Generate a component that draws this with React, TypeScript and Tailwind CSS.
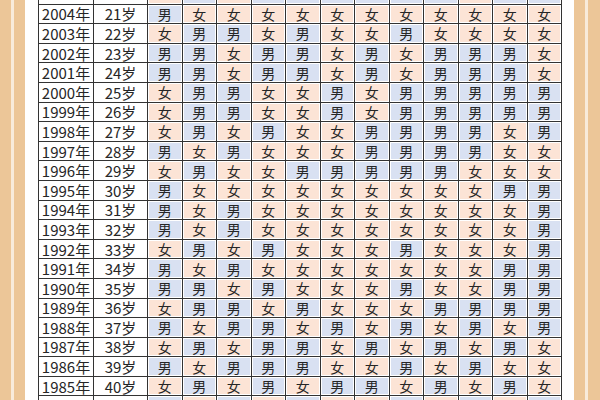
import React from "react";

const rows: [number, string][] = [
  [2005, "女男女男男男男男男女男男"],
  [2004, "男女女女女女女女女女女女"],
  [2003, "女男男女男女女男女女女女"],
  [2002, "男男女男男女男女男男男女"],
  [2001, "男男女男男女男女男男男女"],
  [2000, "女男男女女男女男男男男男"],
  [1999, "女男男女女男女男男男男男"],
  [1998, "女男女男女女男男男男女男"],
  [1997, "男女男女女女男男男男女女"],
  [1996, "女男女女男男男男男女女女"],
  [1995, "男女女女女女女女女女男男"],
  [1994, "男女男女女女女女女女女男"],
  [1993, "男女男女女女女女女女女男"],
  [1992, "女男女男女女女男女女女男"],
  [1991, "男女男女女女女女女女男男"],
  [1990, "男男女男女女女男女女男男"],
  [1989, "女男男女男女女女男男男男"],
  [1988, "男女男男女男女男女男女男"],
  [1987, "女男女男男女男女男女男女"],
  [1986, "男女男男男女女男女男女女"],
  [1985, "女男女男女男男女男女男女"],
  [1984, "男女男女男女女男女男女男"],
];

// first and last rows are only a sliver at the edges, so no labels there
const hidden = (year: number) => year === 2005 || year === 1984;

const Cell = ({ v, blank }: { v: string; blank: boolean }) => (
  <div className="bg-white p-px">
    <div
      className={
        v === "男"
          ? "h-full flex items-center justify-center bg-[#d9e1f2]"
          : "h-full flex items-center justify-center bg-[#fce4d6]"
      }
    >
      {blank ? "" : v}
    </div>
  </div>
);

const App = () => {
  return (
    <div
      className="w-[600px] h-[400px] overflow-hidden bg-white flex text-[#262626]"
      style={{ fontFamily: '"Noto Sans CJK SC", "Noto Sans", sans-serif' }}
    >
      <div className="flex h-full">
        <div className="w-[11px] bg-[#ecc698]" />
        <div className="w-[3px] bg-[#f8ebdb]" />
        <div className="w-[11px] bg-[#ecc698]" />
      </div>
      <div className="w-[13px]" />
      <div className="mt-[-16px]">
        <div className="grid grid-cols-[54px_53px_repeat(12,33.5px)] auto-rows-[18.6px] gap-px bg-[#333333] border border-[#333333] text-[14px] leading-none">
          {rows.map(([year, data]) => (
            <React.Fragment key={year}>
              <div className="bg-white flex items-center justify-center text-[15px]">
                {hidden(year) ? "" : `${year}年`}
              </div>
              <div className="bg-white flex items-center justify-center text-[15px]">
                {hidden(year) ? "" : `${2025 - year}岁`}
              </div>
              {data.split("").map((v, i) => (
                <Cell key={i} v={v} blank={hidden(year)} />
              ))}
            </React.Fragment>
          ))}
        </div>
      </div>
      <div className="w-[12px]" />
      <div className="flex h-full">
        <div className="w-[11px] bg-[#ecc698]" />
        <div className="w-[3px] bg-[#f8ebdb]" />
        <div className="w-[12px] bg-[#ecc698]" />
      </div>
    </div>
  );
};

export default App;
